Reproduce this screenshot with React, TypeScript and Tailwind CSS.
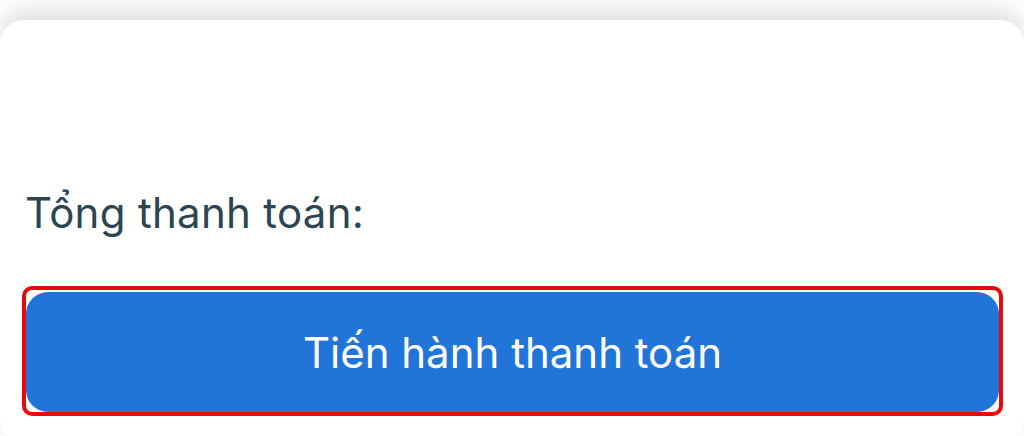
export default function App() {
  return (
    <div className="w-[1024px] h-[436px] overflow-hidden bg-white pt-[20px]" style={{ fontFamily: 'Inter, "Noto Sans", sans-serif' }}>
      <div className="h-[422px] rounded-[24px] bg-white shadow-[0_-10px_24px_rgba(0,0,0,0.13)] flex flex-col">
        <div className="h-[165px]" />
        <div className="pl-[25px] text-[42px] leading-[56px] tracking-[0.3px] text-[#2c4552]">Tổng thanh toán:</div>
        <div className="mt-[45px] ml-[22px] mr-[21px] rounded-[10px] border-[4px] border-[#e60a0a] pt-[2px]">
          <button className="w-full h-[120px] rounded-[22px] bg-[#2275d8] text-white text-[42px] flex items-center justify-center">
            Tiến hành thanh toán
          </button>
        </div>
      </div>
    </div>
  );
}
